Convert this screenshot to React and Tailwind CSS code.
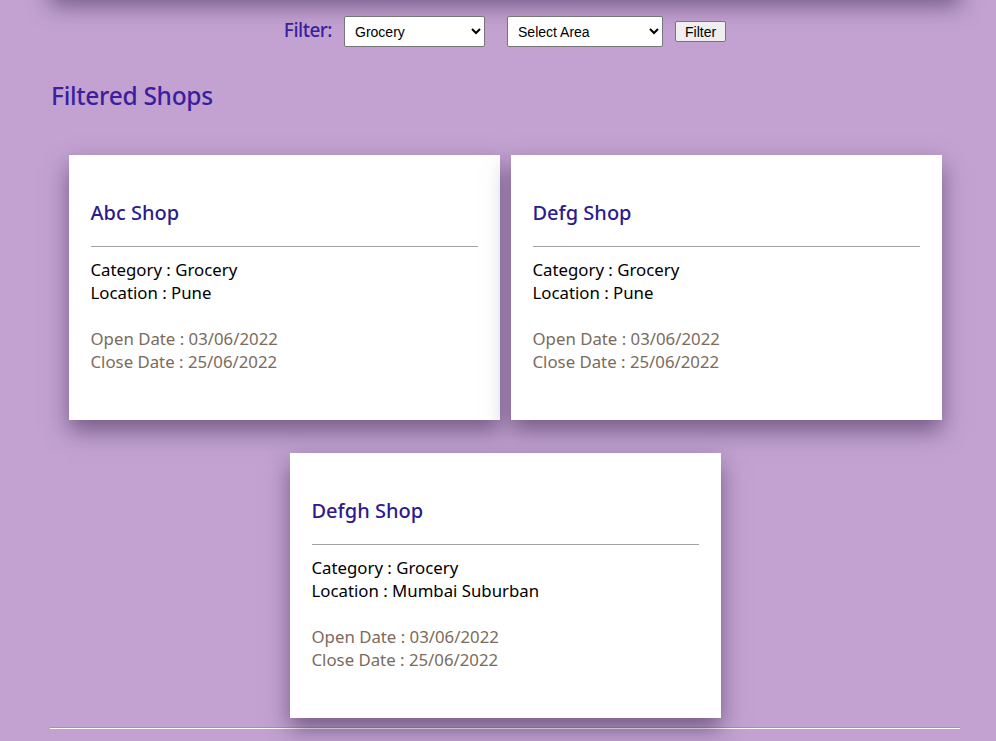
import React from 'react';

const shops = [
  { id: 1, name: 'Abc Shop', category: 'Grocery', location: 'Pune', open: '03/06/2022', close: '25/06/2022' },
  { id: 2, name: 'Defg Shop', category: 'Grocery', location: 'Pune', open: '03/06/2022', close: '25/06/2022' },
  { id: 3, name: 'Defgh Shop', category: 'Grocery', location: 'Mumbai Suburban', open: '03/06/2022', close: '25/06/2022' },
];

const ShopCard = ({ shop }) => (
  <div className="w-[431px] h-[265px] bg-white px-[22px] pt-[44px] shadow-[0_11px_22px_rgba(40,20,60,0.5)]">
    <h3 className="text-[20px] leading-[27px] font-medium text-[#2d1a8e]">{shop.name}</h3>
    <div className="mt-[20px] border-t border-[#a3a3a3]" />
    <div className="mt-[11px] text-[16.8px] leading-[23px] text-black">
      <p>Category : {shop.category}</p>
      <p>Location : {shop.location}</p>
    </div>
    <div className="mt-[23px] text-[16.8px] leading-[23px] text-[#7b6b5c]">
      <p>Open Date : {shop.open}</p>
      <p>Close Date : {shop.close}</p>
    </div>
  </div>
);

const App = () => {
  return (
    <div
      className="min-h-screen bg-[#c3a2d2] overflow-hidden"
      style={{ fontFamily: '"Noto Sans", "Open Sans", sans-serif' }}
    >
      <div className="w-[910px] ml-[50px]">
        {/* header card sitting just above the viewport */}
        <div className="h-10 -mt-[45px] bg-white shadow-[0_11px_22px_rgba(40,20,60,0.5)]" />

        {/* Filter */}
        <div className="mt-[21px] flex items-center justify-center">
          <span className="text-[19px] font-medium text-[#3a1f9c] tracking-[-0.5px] mr-[12px] -mt-[2px]">Filter:</span>
          <select
            defaultValue="Grocery"
            className="w-[141px] h-[31px] bg-white border border-[#767676] rounded-[2px] px-[6px] text-[14px] text-black"
            style={{ fontFamily: '"Liberation Sans", Arial, sans-serif' }}
          >
            <option>Grocery</option>
            <option>Medical</option>
          </select>
          <select
            defaultValue=""
            className="ml-[22px] w-[156px] h-[31px] bg-white border border-[#767676] rounded-[2px] px-[6px] text-[14px] text-black"
            style={{ fontFamily: '"Liberation Sans", Arial, sans-serif' }}
          >
            <option value="">Select Area</option>
            <option>Pune</option>
          </select>
          <button
            className="ml-[12px] h-[21px] px-[9px] bg-[#efefef] border border-[#767676] rounded-[2px] text-[14px] leading-none text-black"
            style={{ fontFamily: '"Liberation Sans", Arial, sans-serif' }}
          >
            Filter
          </button>
        </div>

        <h2 className="mt-[32px] ml-[1px] text-[24.5px] leading-[34px] font-medium tracking-[-0.3px] text-[#3a1f9c]">Filtered Shops</h2>

        <div className="mt-[42px] flex flex-wrap justify-center gap-x-[11px] gap-y-[33px]">
          {shops.map(s => (
            <ShopCard key={s.id} shop={s} />
          ))}
        </div>

        <div className="mt-[9px] border-t border-b border-t-[#9a9a9a] border-b-white" />
      </div>
    </div>
  );
};

export default App;
